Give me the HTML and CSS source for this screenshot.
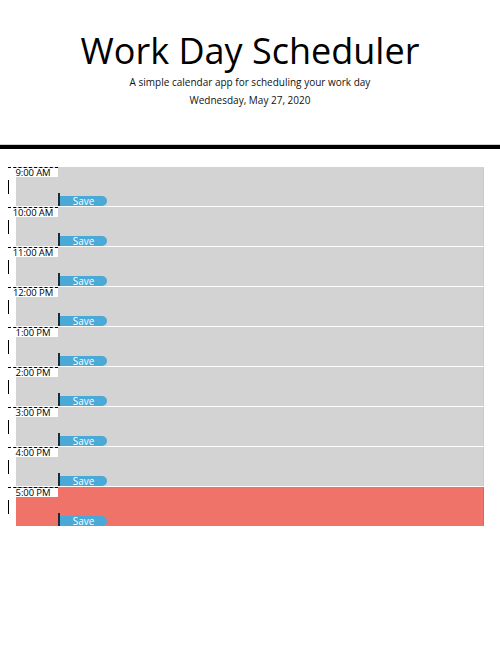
FILE: index.html
```html
<!DOCTYPE html>
<html lang="en">
<head>
<meta charset="utf-8">
<title>Work Day Scheduler</title>
<link rel="stylesheet" href="styles.css">
</head>
<body>
<header class="jumbotron">
  <h1 class="title">Work Day Scheduler</h1>
  <p class="lead">A simple calendar app for scheduling your work day</p>
  <p class="lead date">Wednesday, May 27, 2020</p>
</header>
<div class="bar"></div>
<main class="schedule">
  <div class="row"><div class="hour">9:00 AM</div><textarea class="description past"></textarea><div class="saveBtn"><span class="pill">Save</span></div></div>
  <div class="row"><div class="hour">10:00 AM</div><textarea class="description past"></textarea><div class="saveBtn"><span class="pill">Save</span></div></div>
  <div class="row"><div class="hour">11:00 AM</div><textarea class="description past"></textarea><div class="saveBtn"><span class="pill">Save</span></div></div>
  <div class="row"><div class="hour">12:00 PM</div><textarea class="description past"></textarea><div class="saveBtn"><span class="pill">Save</span></div></div>
  <div class="row"><div class="hour">1:00 PM</div><textarea class="description past"></textarea><div class="saveBtn"><span class="pill">Save</span></div></div>
  <div class="row"><div class="hour">2:00 PM</div><textarea class="description past"></textarea><div class="saveBtn"><span class="pill">Save</span></div></div>
  <div class="row"><div class="hour">3:00 PM</div><textarea class="description past"></textarea><div class="saveBtn"><span class="pill">Save</span></div></div>
  <div class="row"><div class="hour">4:00 PM</div><textarea class="description past"></textarea><div class="saveBtn"><span class="pill">Save</span></div></div>
  <div class="row"><div class="hour">5:00 PM</div><textarea class="description present"></textarea><div class="saveBtn"><span class="pill">Save</span></div></div>
</main>
</body>
</html>
```

FILE: styles.css
```css
html, body {
  margin: 0;
  padding: 0;
  background: #ffffff;
  font-family: "Open Sans", "Noto Sans", sans-serif;
  color: #000;
}

.jumbotron {
  text-align: center;
  padding-top: 30px;
}

.title {
  margin: 0;
  font-size: 36px;
  line-height: 41px;
  font-weight: 400;
}

.lead {
  margin: 2px 0 0;
  font-size: 10px;
  line-height: 18px;
  color: #111;
}

.date {
  margin-top: 0;
}

.bar {
  margin-top: 35px;
  height: 4px;
  background: #000;
  border-top: 1px solid #cfcfcf;
}

.schedule {
  margin-top: 18px;
  padding: 0 16px 0 8px;
}

.row {
  display: grid;
  grid-template-columns: 50px 49px 1fr;
  grid-template-rows: 1fr 14px;
  height: 40px;
}

.description {
  grid-column: 1 / -1;
  grid-row: 1 / -1;
  margin: 0 0 0 8px;
  height: 39px;
  padding: 0;
  border: none;
  border-right: 1px solid #c9c9c9;
  resize: none;
  box-sizing: border-box;
  font: inherit;
}

.past {
  background: #d3d3d3;
}

.present {
  background: #f07369;
  border-right-color: #e46257;
}

.hour {
  grid-column: 1;
  grid-row: 1 / -1;
  z-index: 1;
  border-top: 1px dashed #000;
  box-sizing: border-box;
  font-size: 9.5px;
  line-height: 9px;
  text-align: center;
  letter-spacing: -0.1px;
  background:
    linear-gradient(#fff, #fff) 0 0 / 100% 9px no-repeat,
    linear-gradient(#000, #000) 0 0 / 1px 3px no-repeat,
    linear-gradient(#000, #000) 100% 0 / 1px 3px no-repeat,
    linear-gradient(#000, #000) 0 12px / 1px 14px no-repeat;
}

.saveBtn {
  grid-column: 2;
  grid-row: 2;
  z-index: 2;
  display: flex;
  flex-direction: column;
  justify-content: flex-end;
  height: 13px;
  border-left: 2px solid #1f2a33;
  box-sizing: border-box;
}

.pill {
  display: block;
  height: 10px;
  background: #4aa9d7;
  border-radius: 0 6px 6px 0;
  color: #fff;
  font-size: 10px;
  line-height: 10px;
  text-align: center;
}
```
